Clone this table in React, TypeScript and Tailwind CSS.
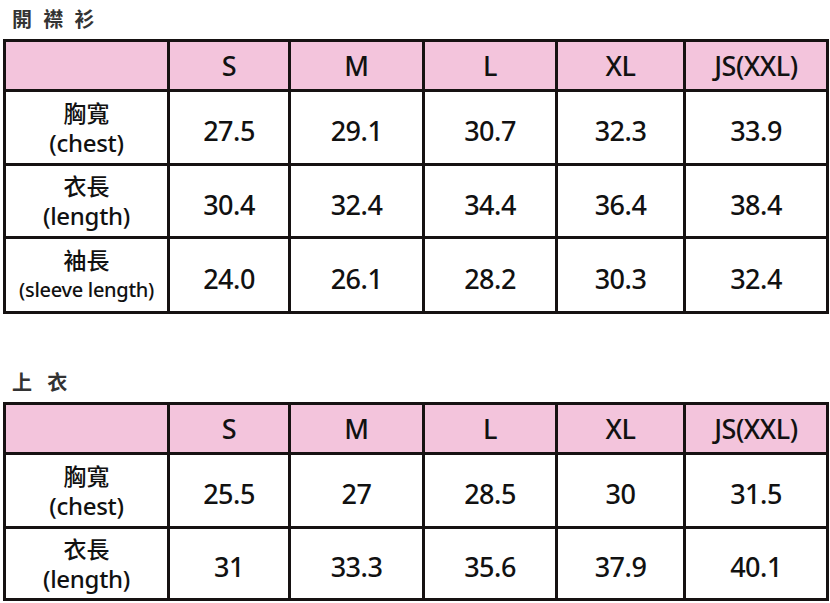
import React from 'react';

const sizes = ['S', 'M', 'L', 'XL', 'JS(XXL)'];

type Row = { zh: string; en: string; small?: boolean; values: string[] };

const shirt: Row[] = [
  { zh: '胸寬', en: '(chest)', values: ['27.5', '29.1', '30.7', '32.3', '33.9'] },
  { zh: '衣長', en: '(length)', values: ['30.4', '32.4', '34.4', '36.4', '38.4'] },
  { zh: '袖長', en: '(sleeve length)', small: true, values: ['24.0', '26.1', '28.2', '30.3', '32.4'] },
];

const top: Row[] = [
  { zh: '胸寬', en: '(chest)', values: ['25.5', '27', '28.5', '30', '31.5'] },
  { zh: '衣長', en: '(length)', values: ['31', '33.3', '35.6', '37.9', '40.1'] },
];

const SizeTable = ({ rows, rowsClass }: { rows: Row[]; rowsClass: string }) => {
  return (
    <div
      className={`ml-[3px] grid w-[826px] grid-cols-[161px_118px_131px_130px_125px_140px] gap-[3px] bg-[#161212] p-[3px] ${rowsClass}`}
    >
      <div className="bg-[#f3c4dc]" />
      {sizes.map((s) => (
        <div key={s} className="flex items-center justify-center bg-[#f3c4dc] text-[27px] font-medium leading-none tracking-[-0.5px] text-[#111]">
          {s}
        </div>
      ))}
      {rows.map((r) => (
        <React.Fragment key={r.zh}>
          <div className="flex flex-col items-center justify-center bg-white font-medium text-[#111]">
            <span className="text-[23px] leading-[30px]">{r.zh}</span>
            <span className={r.small ? 'text-[20px] leading-[30px] tracking-[-0.3px]' : 'text-[24px] leading-[30px] tracking-[-0.3px]'}>{r.en}</span>
          </div>
          {r.values.map((v, i) => (
            <div key={i} className="flex items-center justify-center bg-white pt-[6px] text-[27px] font-medium leading-none tracking-[-0.5px] text-[#111]">
              {v}
            </div>
          ))}
        </React.Fragment>
      ))}
    </div>
  );
};

export default function App() {
  return (
    <div className="h-[603px] w-[830px] overflow-hidden bg-white font-['Noto_Sans','Noto_Sans_CJK_TC',sans-serif]">
      <div className="flex h-[39px] items-center pl-[12px] text-[20px] font-bold tracking-[3px] text-[#333]">
        開 襟 衫
      </div>
      <SizeTable rows={shirt} rowsClass="grid-rows-[47px_71px_70px_72px]" />
      <div className="mt-[49px] flex h-[39px] items-center pl-[12px] text-[20px] font-bold tracking-[5px] text-[#333]">
        上 衣
      </div>
      <SizeTable rows={top} rowsClass="grid-rows-[47px_71px_69px]" />
    </div>
  );
}
